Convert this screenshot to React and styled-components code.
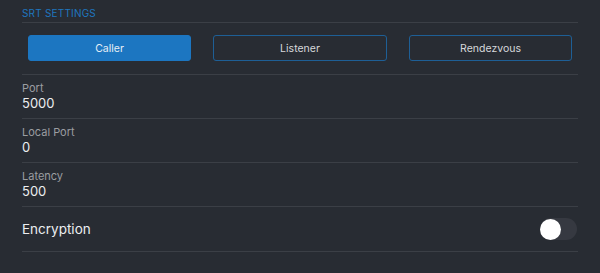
import React, { useState } from "react";
import styled, { createGlobalStyle } from "styled-components";

const GlobalStyle = createGlobalStyle`
  html, body {
    margin: 0;
    padding: 0;
    background: #282c33;
  }
  body {
    font-family: Inter, "Open Sans", sans-serif;
    -webkit-font-smoothing: antialiased;
  }
`;

const Panel = styled.div`
  padding: 0 22px;
  width: 556px;
`;

const Header = styled.div`
  height: 23px;
  box-sizing: border-box;
  padding-top: 7px;
  font-size: 10px;
  line-height: 12px;
  letter-spacing: 0.2px;
  color: #1f76bf;
  border-bottom: 1px solid #3b3f46;
`;

const ModeBar = styled.div`
  display: grid;
  grid-template-columns: 163px 174px 163px;
  column-gap: 22px;
  padding: 12px 6px 13px;
  border-bottom: 1px solid #3b3f46;
`;

const ModeButton = styled.button`
  height: 26px;
  box-sizing: border-box;
  border-radius: 3px;
  border: 1px solid ${(p) => (p.$active ? "#1c76c1" : "#1e5f96")};
  background: ${(p) => (p.$active ? "#1c76c1" : "transparent")};
  color: ${(p) => (p.$active ? "#e6eef6" : "#d6d8db")};
  font-family: inherit;
  font-size: 10.5px;
  cursor: pointer;
  padding: 0;
`;

const Field = styled.div`
  padding: 6px 0 6px;
  border-bottom: 1px solid #3b3f46;
`;

const Label = styled.div`
  font-size: 11px;
  line-height: 14px;
  color: #9b9da1;
`;

const Value = styled.div`
  font-size: 13px;
  line-height: 17px;
  color: #eceef0;
`;

const SwitchRow = styled.div`
  display: flex;
  align-items: center;
  justify-content: space-between;
  height: 44px;
  border-bottom: 1px solid #3b3f46;
  font-size: 13.5px;
  color: #eceef0;
`;

const Track = styled.button`
  position: relative;
  width: 37px;
  height: 22px;
  margin-right: 1px;
  border: none;
  padding: 0;
  border-radius: 11px;
  background: ${(p) => (p.$on ? "#1c76c1" : "#363941")};
  cursor: pointer;
`;

const Knob = styled.span`
  position: absolute;
  top: 0.5px;
  left: ${(p) => (p.$on ? "16px" : "0")};
  width: 21px;
  height: 21px;
  border-radius: 50%;
  background: #ffffff;
`;

const modes = ["Caller", "Listener", "Rendezvous"];

const fields = [
  { label: "Port", value: "5000" },
  { label: "Local Port", value: "0" },
  { label: "Latency", value: "500" },
];

export default function App() {
  const [mode, setMode] = useState("Caller");
  const [encrypt, setEncrypt] = useState(false);

  return (
    <>
      <GlobalStyle />
      <Panel>
        <Header>SRT SETTINGS</Header>
        <ModeBar>
          {modes.map((m) => (
            <ModeButton key={m} $active={m === mode} onClick={() => setMode(m)}>
              {m}
            </ModeButton>
          ))}
        </ModeBar>
        {fields.map((f) => (
          <Field key={f.label}>
            <Label>{f.label}</Label>
            <Value>{f.value}</Value>
          </Field>
        ))}
        <SwitchRow>
          Encryption
          <Track $on={encrypt} onClick={() => setEncrypt(!encrypt)}>
            <Knob $on={encrypt} />
          </Track>
        </SwitchRow>
      </Panel>
    </>
  );
}
